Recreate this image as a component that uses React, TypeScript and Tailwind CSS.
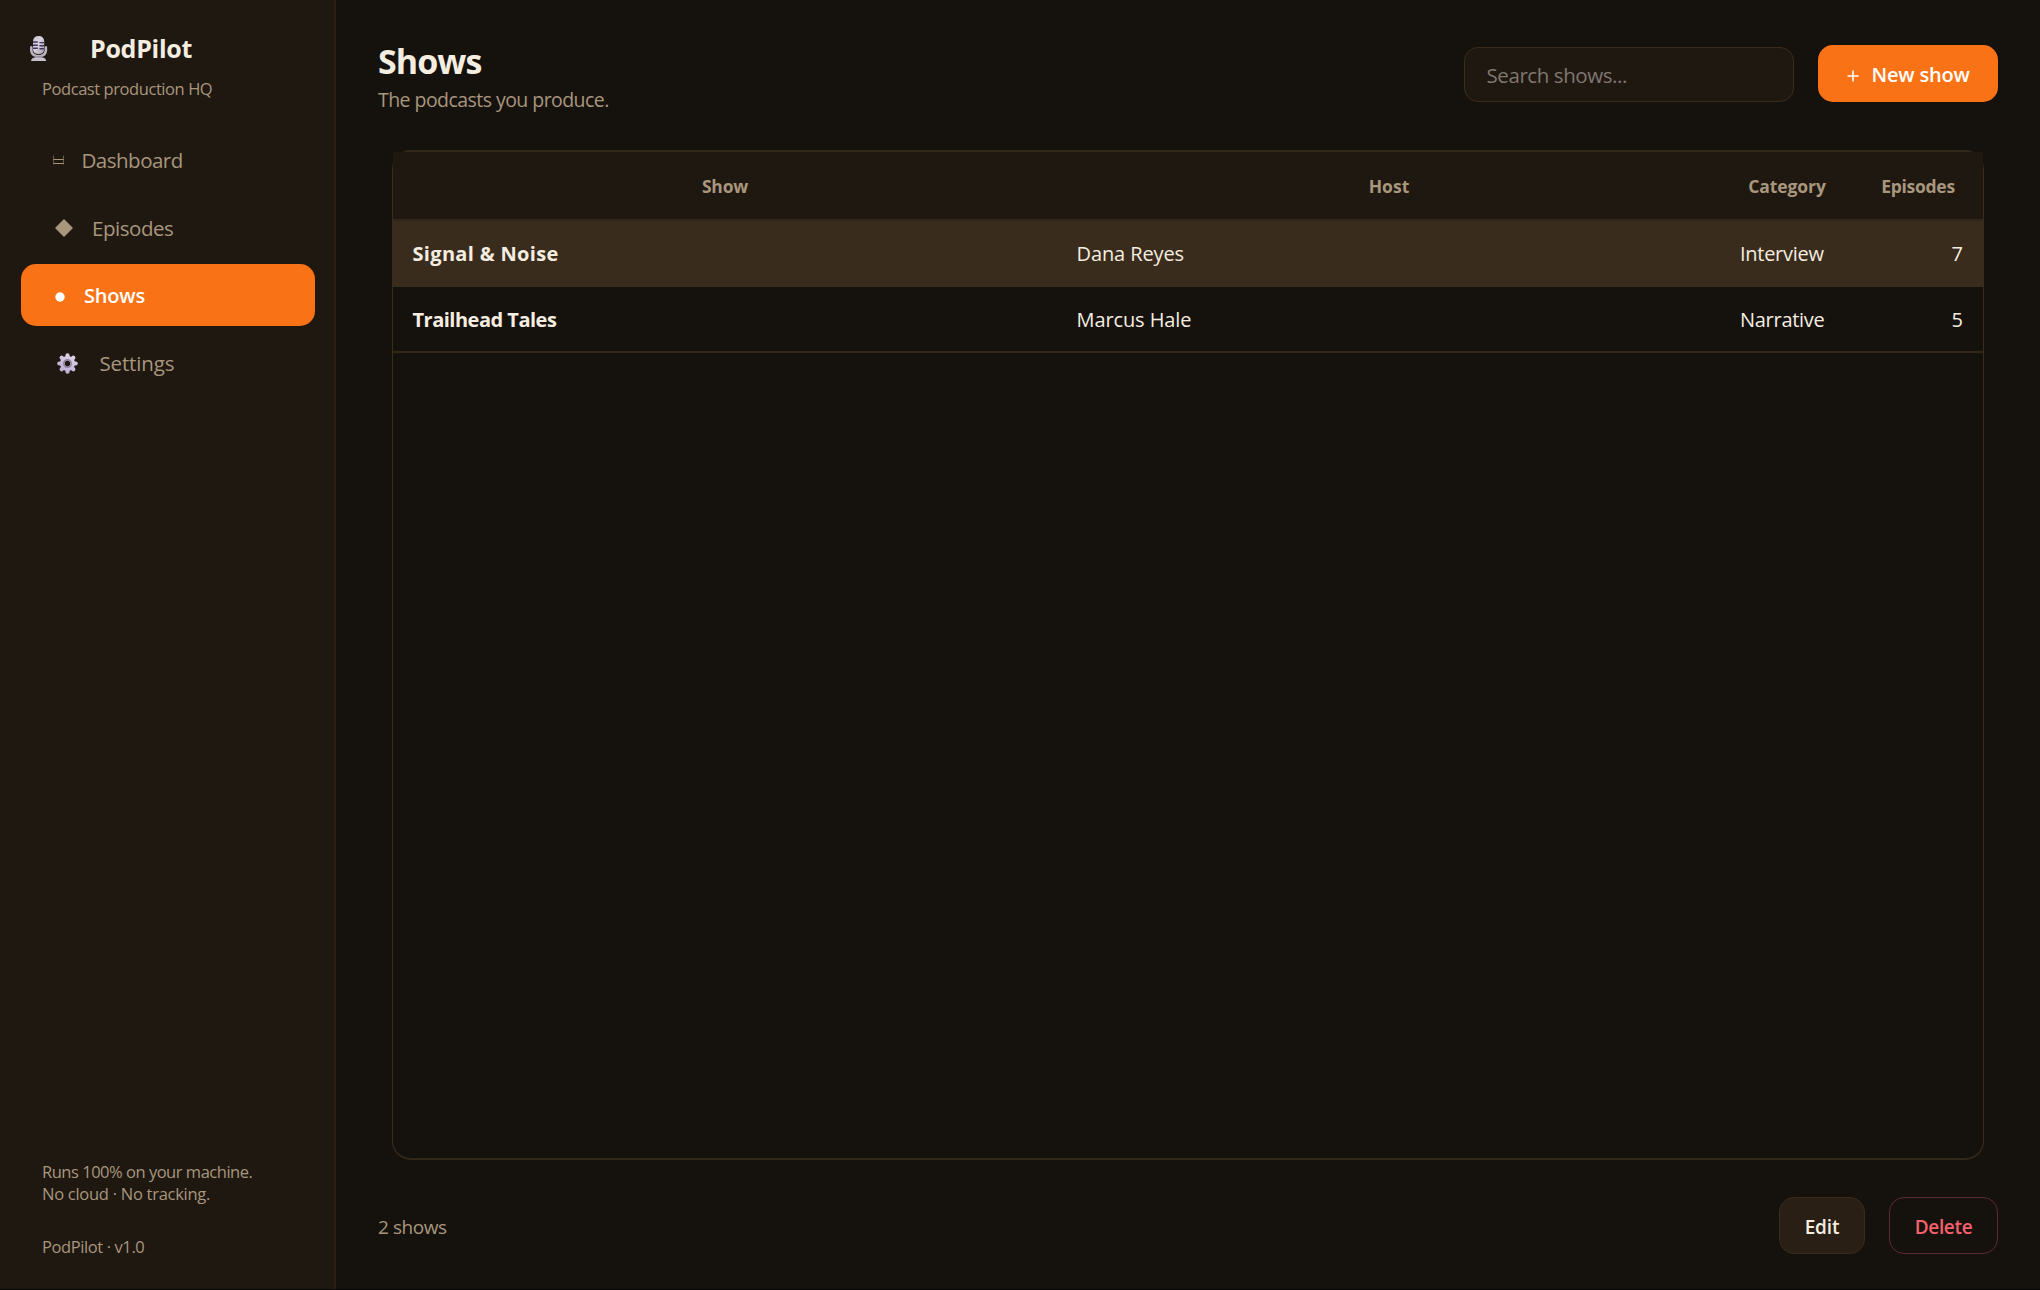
function MicIcon() {
  return (
    <svg width="18" height="26" viewBox="0 0 18 26" fill="none">
      <defs>
        <linearGradient id="mic" x1="0" y1="0" x2="1" y2="1">
          <stop offset="0" stopColor="#c9c3cd" />
          <stop offset="0.45" stopColor="#d8d3de" />
          <stop offset="1" stopColor="#a49cad" />
        </linearGradient>
      </defs>
      <path d="M0 11.5Q0 10 1.3 10Q2.6 10 2.6 11.5V14.5Q3.4 18.8 8.6 19Q13.8 18.8 14.6 14.5V11.5Q14.6 10 15.9 10Q17.2 10 17.2 11.5V14.5Q16.6 20 11.6 21H5.6Q0.6 20 0 14.5Z" fill="#b9b1c0" />
      <path d="M3 5.5Q3.2 0 8.6 0Q14 0 14.2 5.5V13.5Q13.6 18 8.6 18.2Q3.6 18 3 13.5Z" fill="url(#mic)" />
      <path d="M3 6H7.8M9.4 6.6H14M3 9.2H7.8M9.4 9.8H14M3 12.2H7.8M9.4 12.8H14" stroke="#443460" strokeWidth="1.4" />
      <path d="M5.6 20.2H11.6L12.4 22H4.8Z" fill="#8d8496" />
      <path d="M1 25Q1.6 21.8 5 21.6H12.2Q15.6 21.8 16.2 25Z" fill="#c6bfcc" />
    </svg>
  );
}

function DashboardIcon() {
  return (
    <svg width="12" height="10" viewBox="0 0 12 10" fill="none">
      <path d="M0.5 0.5V9.5M10.5 0.5V9.5" stroke="#675949" />
      <path d="M0.5 4.5H10.5M0.5 8.5H10.5" stroke="#a8967d" />
    </svg>
  );
}

function DiamondIcon() {
  return (
    <svg width="18" height="18" viewBox="0 0 18 18">
      <path d="M9 0L18 9L9 18L0 9Z" fill="#a8967d" />
    </svg>
  );
}

function DotIcon() {
  return (
    <svg width="10" height="10" viewBox="0 0 10 10">
      <circle cx="5" cy="5" r="4.7" fill="#fff" />
    </svg>
  );
}

function GearIcon() {
  return (
    <svg width="21" height="21" viewBox="0 0 21 21" fill="none">
      <defs>
        <linearGradient id="gear" gradientUnits="userSpaceOnUse" x1="16" y1="0" x2="5" y2="21">
          <stop offset="0" stopColor="#dfd8e8" />
          <stop offset="1" stopColor="#b9a9d3" />
        </linearGradient>
      </defs>
      <path
        d="M10.5 2.3L10.51 5M10.49 16L10.51 18.7M2.3 10.49L5 10.51M16 10.51L18.7 10.49M4.7 4.7L7 7M14 14L16.3 16.3M4.7 16.3L7 14M14 7L16.3 4.7"
        stroke="url(#gear)"
        strokeWidth="4.2"
        strokeLinecap="round"
      />
      <circle cx="10.5" cy="10.5" r="5.2" stroke="url(#gear)" strokeWidth="4.6" />
      <circle cx="10.5" cy="10.5" r="3.8" stroke="#8f849c" strokeWidth="1.4" />
    </svg>
  );
}

const navItems = [
  { label: "Dashboard", icon: <DashboardIcon />, className: "pl-[32px] gap-[16.5px] tracking-[-0.5px]" },
  { label: "Episodes", icon: <DiamondIcon />, className: "pl-[34px] gap-[19px] tracking-[-0.45px]" },
  { label: "Shows", icon: <DotIcon />, active: true, className: "pl-[34px] gap-[19px] tracking-[-0.2px]" },
  { label: "Settings", icon: <GearIcon />, className: "pl-[36px] gap-[21.5px] tracking-[-0.15px]" },
];

const shows = [
  { name: "Signal & Noise", host: "Dana Reyes", category: "Interview", episodes: 7, selected: true, nameClass: "tracking-[0.32px]" },
  { name: "Trailhead Tales", host: "Marcus Hale", category: "Narrative", episodes: 5, selected: false, nameClass: "tracking-[-0.5px]" },
];

function Sidebar() {
  return (
    <aside className="flex w-[336px] shrink-0 flex-col border-r-2 border-[#2a1f14] bg-[#1f1811]">
      <div className="flex h-[26px] mt-9 items-center pl-[30px]">
        <div className="w-[60px]"><MicIcon /></div>
        <span className="text-[25px] font-bold tracking-[-0.28px] text-[#f5ede0]">PodPilot</span>
      </div>
      <div className="mt-4 h-[22px] pl-[42px] text-[16.5px] leading-[22px] tracking-[-0.43px]">Podcast production HQ</div>

      <nav className="mt-[28.5px] flex flex-col gap-[6px] pl-[21px] pr-[19px]">
        {navItems.map((item) => (
          <a
            key={item.label}
            className={`flex h-[61.7px] items-center rounded-[15px] ${item.className} ${item.active ? "bg-[#f97316] font-semibold text-white text-[20px]" : "text-[20.5px]"}`}
          >
            <span className={item.active ? "pt-[5px]" : "pt-[2px]"}>{item.icon}</span>
            <span className="pt-[2px]">{item.label}</span>
          </a>
        ))}
      </nav>

      <div className="mt-auto pb-[31px] pl-[42px] text-[16.5px] leading-[22px]">
        <div className="tracking-[-0.48px]">Runs 100% on your machine.</div>
        <div className="tracking-[-0.27px]">No cloud · No tracking.</div>
        <div className="mt-[31px] tracking-[-0.4px]">PodPilot · v1.0</div>
      </div>
    </aside>
  );
}

export default function App() {
  return (
    <div className="flex h-[1290px] w-[2040px] overflow-hidden border-b border-[#080605] bg-[#15120d] font-['Open_Sans','Noto_Sans',sans-serif] text-[#a8967d]">
      <Sidebar />

      <main className="flex flex-1 flex-col pr-[42px]">
        <header className="flex h-[150px] items-start pl-[42px]">
          <div className="pt-[38px]">
            <h1 className="text-[34px] font-bold leading-[46px] tracking-[-0.95px] text-[#f5ede0]">Shows</h1>
            <p className="text-[19.5px] leading-[32px] tracking-[-0.55px]">The podcasts you produce.</p>
          </div>
          <input
            placeholder="Search shows..."
            className="mt-[47px] ml-auto h-[55px] w-[330px] rounded-[14px] border border-[#3a2c1c] bg-[#1f1811] pl-[21.5px] text-[20.5px] tracking-[-0.42px] placeholder:text-[#7f776f]"
          />
          <button className="mt-[45px] ml-[24px] flex h-[57px] w-[180px] items-center rounded-[15px] bg-[#f97316] pl-[29px] text-[20px] font-semibold text-white">
            <svg width="12" height="12" viewBox="0 0 12 12" className="mt-[4px]">
              <path d="M6 0.5V11.5M0.5 6H11.5" stroke="white" strokeWidth="1.6" />
            </svg>
            <span className="ml-[12.5px] pt-[2px] tracking-[-0.2px]">New show</span>
          </button>
        </header>

        <section className="ml-[56px] mr-[14px] h-[1010px] rounded-[19px] border-x border-y-2 border-x-[#3a2c1c] border-y-[#33271a]">
          <div className="grid h-[69px] grid-cols-[664px_664px_134px_128px] items-center border-b-2 border-[#33271a] bg-[#1f1811] pt-[2px] text-center text-[17.5px] font-bold">
            <span className="tracking-[-0.2px]">Show</span>
            <span>Host</span>
            <span className="pr-[2px] tracking-[-0.1px]">Category</span>
            <span className="pr-[2px] tracking-[-0.28px]">Episodes</span>
          </div>
          {shows.map((show) => (
            <div
              key={show.name}
              className={`grid h-[66px] grid-cols-[664px_664px_134px_128px] items-center border-b-2 pt-[2px] text-[20px] text-[#f5ede0] ${show.selected ? "border-[#3a2c1c] bg-[#3a2c1c]" : "border-[#33271a]"}`}
            >
              <span className={`pl-[19.5px] font-bold ${show.nameClass}`}>{show.name}</span>
              <span className="pl-[19.5px] tracking-[-0.1px]">{show.host}</span>
              <span className="pl-[19px] tracking-[-0.28px]">{show.category}</span>
              <span className="pr-[20px] text-right">{show.episodes}</span>
            </div>
          ))}
        </section>

        <footer className="mt-[37px] flex h-[57px] items-center pl-[42px]">
          <span className="pt-[3px] text-[19px] tracking-[-0.45px]">2 shows</span>
          <button className="ml-auto h-[57px] w-[86px] rounded-[15px] border border-[#3a2c1c] bg-[#2a1f14] pt-[3px] text-[19px] font-semibold tracking-[-0.13px] text-[#f5ede0]">Edit</button>
          <button className="ml-[24px] h-[57px] w-[109px] rounded-[15px] border border-[#5f2936] pt-[3px] text-[19px] font-semibold tracking-[-0.32px] text-[#f4606c]">Delete</button>
        </footer>
      </main>
    </div>
  );
}
